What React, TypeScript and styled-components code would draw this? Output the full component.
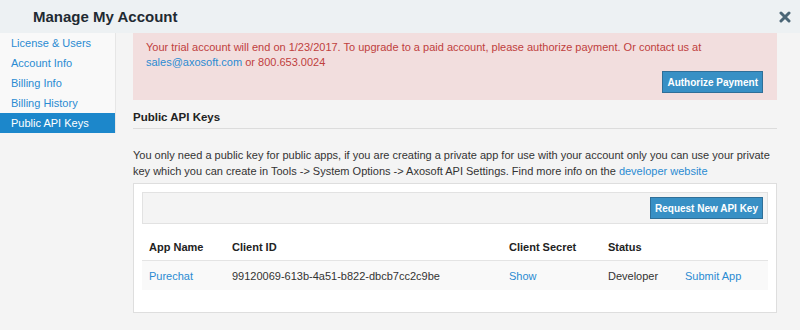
import styled, { createGlobalStyle } from 'styled-components';

const GlobalStyle = createGlobalStyle`
    body {
        margin: 0;
        background: #f4f4f4;
        font-family: 'Liberation Sans', Arial, sans-serif;
        font-size: 11px;
        color: #333;
    }
`;

const Header = styled.header`
    height: 33px;
    display: flex;
    align-items: center;
    justify-content: space-between;
    padding: 0 9px 0 33px;
    background: #edf1f3;
`;

const Title = styled.h1`
    margin: 0;
    font-size: 15px;
    font-weight: 700;
    color: #1f2a32;
`;

const Close = styled.button`
    border: 0;
    padding: 0;
    background: none;
    width: 12px;
    height: 12px;
    display: flex;
`;

const Main = styled.div`
    display: flex;
    align-items: flex-start;
`;

const Sidebar = styled.nav`
    width: 116px;
    flex-shrink: 0;
    background: #f9f9f9;
    border-right: 1px solid #e6e6e6;
    box-sizing: border-box;
`;

const NavItem = styled.a<{ $active?: boolean }>`
    display: block;
    height: 20px;
    line-height: 20px;
    padding-left: 11px;
    font-size: 11px;
    text-decoration: none;
    color: ${({ $active }) => ($active ? '#fff' : '#2a8bd2')};
    background: ${({ $active }) => ($active ? '#1c87cb' : 'transparent')};
`;

const Content = styled.section`
    width: 644px;
    margin-left: 17px;
`;

const Alert = styled.div`
    background: #f2dede;
    color: #c0403d;
    padding: 7px 14px 7px 13px;
    line-height: 15px;
    display: flex;
    flex-direction: column;
`;

const Link = styled.a`
    color: #2a8bd2;
    text-decoration: none;
`;

const Button = styled.button`
    align-self: flex-end;
    height: 22px;
    padding: 0 4px;
    font-family: 'Liberation Sans', Arial, sans-serif;
    font-size: 10px;
    font-weight: 700;
    color: #fff;
    background: #3890c5;
    border: 1px solid #2f6f98;
    border-radius: 0;
`;

const AlertButton = styled(Button)`
    margin-top: 1px;
`;

const Heading = styled.h2`
    margin: 0;
    padding: 9px 0 3px;
    line-height: 16px;
    font-size: 11.5px;
    font-weight: 700;
    color: #222;
    border-bottom: 1px solid #dcdcdc;
`;

const Intro = styled.p`
    margin: 18px 0 4px;
    line-height: 16px;
    color: #333;
`;

const Panel = styled.div`
    background: #fff;
    border: 1px solid #dedede;
    padding: 8px 8px 22px;
`;

const Toolbar = styled.div`
    display: flex;
    justify-content: flex-end;
    padding: 4px;
    background: #f4f4f4;
    border: 1px solid #e2e2e2;
`;

const Table = styled.table`
    width: 100%;
    margin-top: 8px;
    border-collapse: collapse;
    table-layout: fixed;
`;

const Th = styled.th<{ $w?: number }>`
    width: ${({ $w }) => ($w ? `${$w}px` : 'auto')};
    text-align: left;
    padding: 8px 7px 5px;
    line-height: 15px;
    font-size: 11px;
    font-weight: 700;
    color: #222;
    border-bottom: 1px solid #e4e4e4;
`;

const Row = styled.tr`
    background: #f9f9f9;
`;

const Td = styled.td`
    padding: 7px 7px 6px;
    line-height: 16px;
    color: #333;
    white-space: nowrap;
`;

const XIcon = () => (
    <svg width="12" height="12" viewBox="0 0 12 12">
        <path d="M2 2 L10 10 M10 2 L2 10" stroke="#4b6676" strokeWidth="3" strokeLinecap="round" />
    </svg>
);

const navItems = ['License & Users', 'Account Info', 'Billing Info', 'Billing History', 'Public API Keys'];

const App = () => (
    <>
        <GlobalStyle />
        <Header>
            <Title>Manage My Account</Title>
            <Close aria-label="Close">
                <XIcon />
            </Close>
        </Header>
        <Main>
            <Sidebar>
                {navItems.map((item) => (
                    <NavItem key={item} href="#" $active={item === 'Public API Keys'}>
                        {item}
                    </NavItem>
                ))}
            </Sidebar>
            <Content>
                <Alert>
                    <div>
                        Your trial account will end on 1/23/2017. To upgrade to a paid account, please authorize
                        payment. Or contact us at
                        <br />
                        <Link href="#">sales@axosoft.com</Link> or 800.653.0024
                    </div>
                    <AlertButton>Authorize Payment</AlertButton>
                </Alert>

                <Heading>Public API Keys</Heading>
                <Intro>
                    You only need a public key for public apps, if you are creating a private app for use with your
                    account only you can use your private
                    <br />
                    key which you can create in Tools -&gt; System Options -&gt; Axosoft API Settings. Find more info
                    on the <Link href="#">developer website</Link>
                </Intro>

                <Panel>
                    <Toolbar>
                        <Button>Request New API Key</Button>
                    </Toolbar>
                    <Table>
                        <thead>
                            <tr>
                                <Th $w={69}>App Name</Th>
                                <Th $w={263}>Client ID</Th>
                                <Th $w={85}>Client Secret</Th>
                                <Th $w={63}>Status</Th>
                                <Th />
                            </tr>
                        </thead>
                        <tbody>
                            <Row>
                                <Td>
                                    <Link href="#">Purechat</Link>
                                </Td>
                                <Td>99120069-613b-4a51-b822-dbcb7cc2c9be</Td>
                                <Td>
                                    <Link href="#">Show</Link>
                                </Td>
                                <Td>Developer</Td>
                                <Td>
                                    <Link href="#">Submit App</Link>
                                </Td>
                            </Row>
                        </tbody>
                    </Table>
                </Panel>
            </Content>
        </Main>
    </>
);

export default App;
